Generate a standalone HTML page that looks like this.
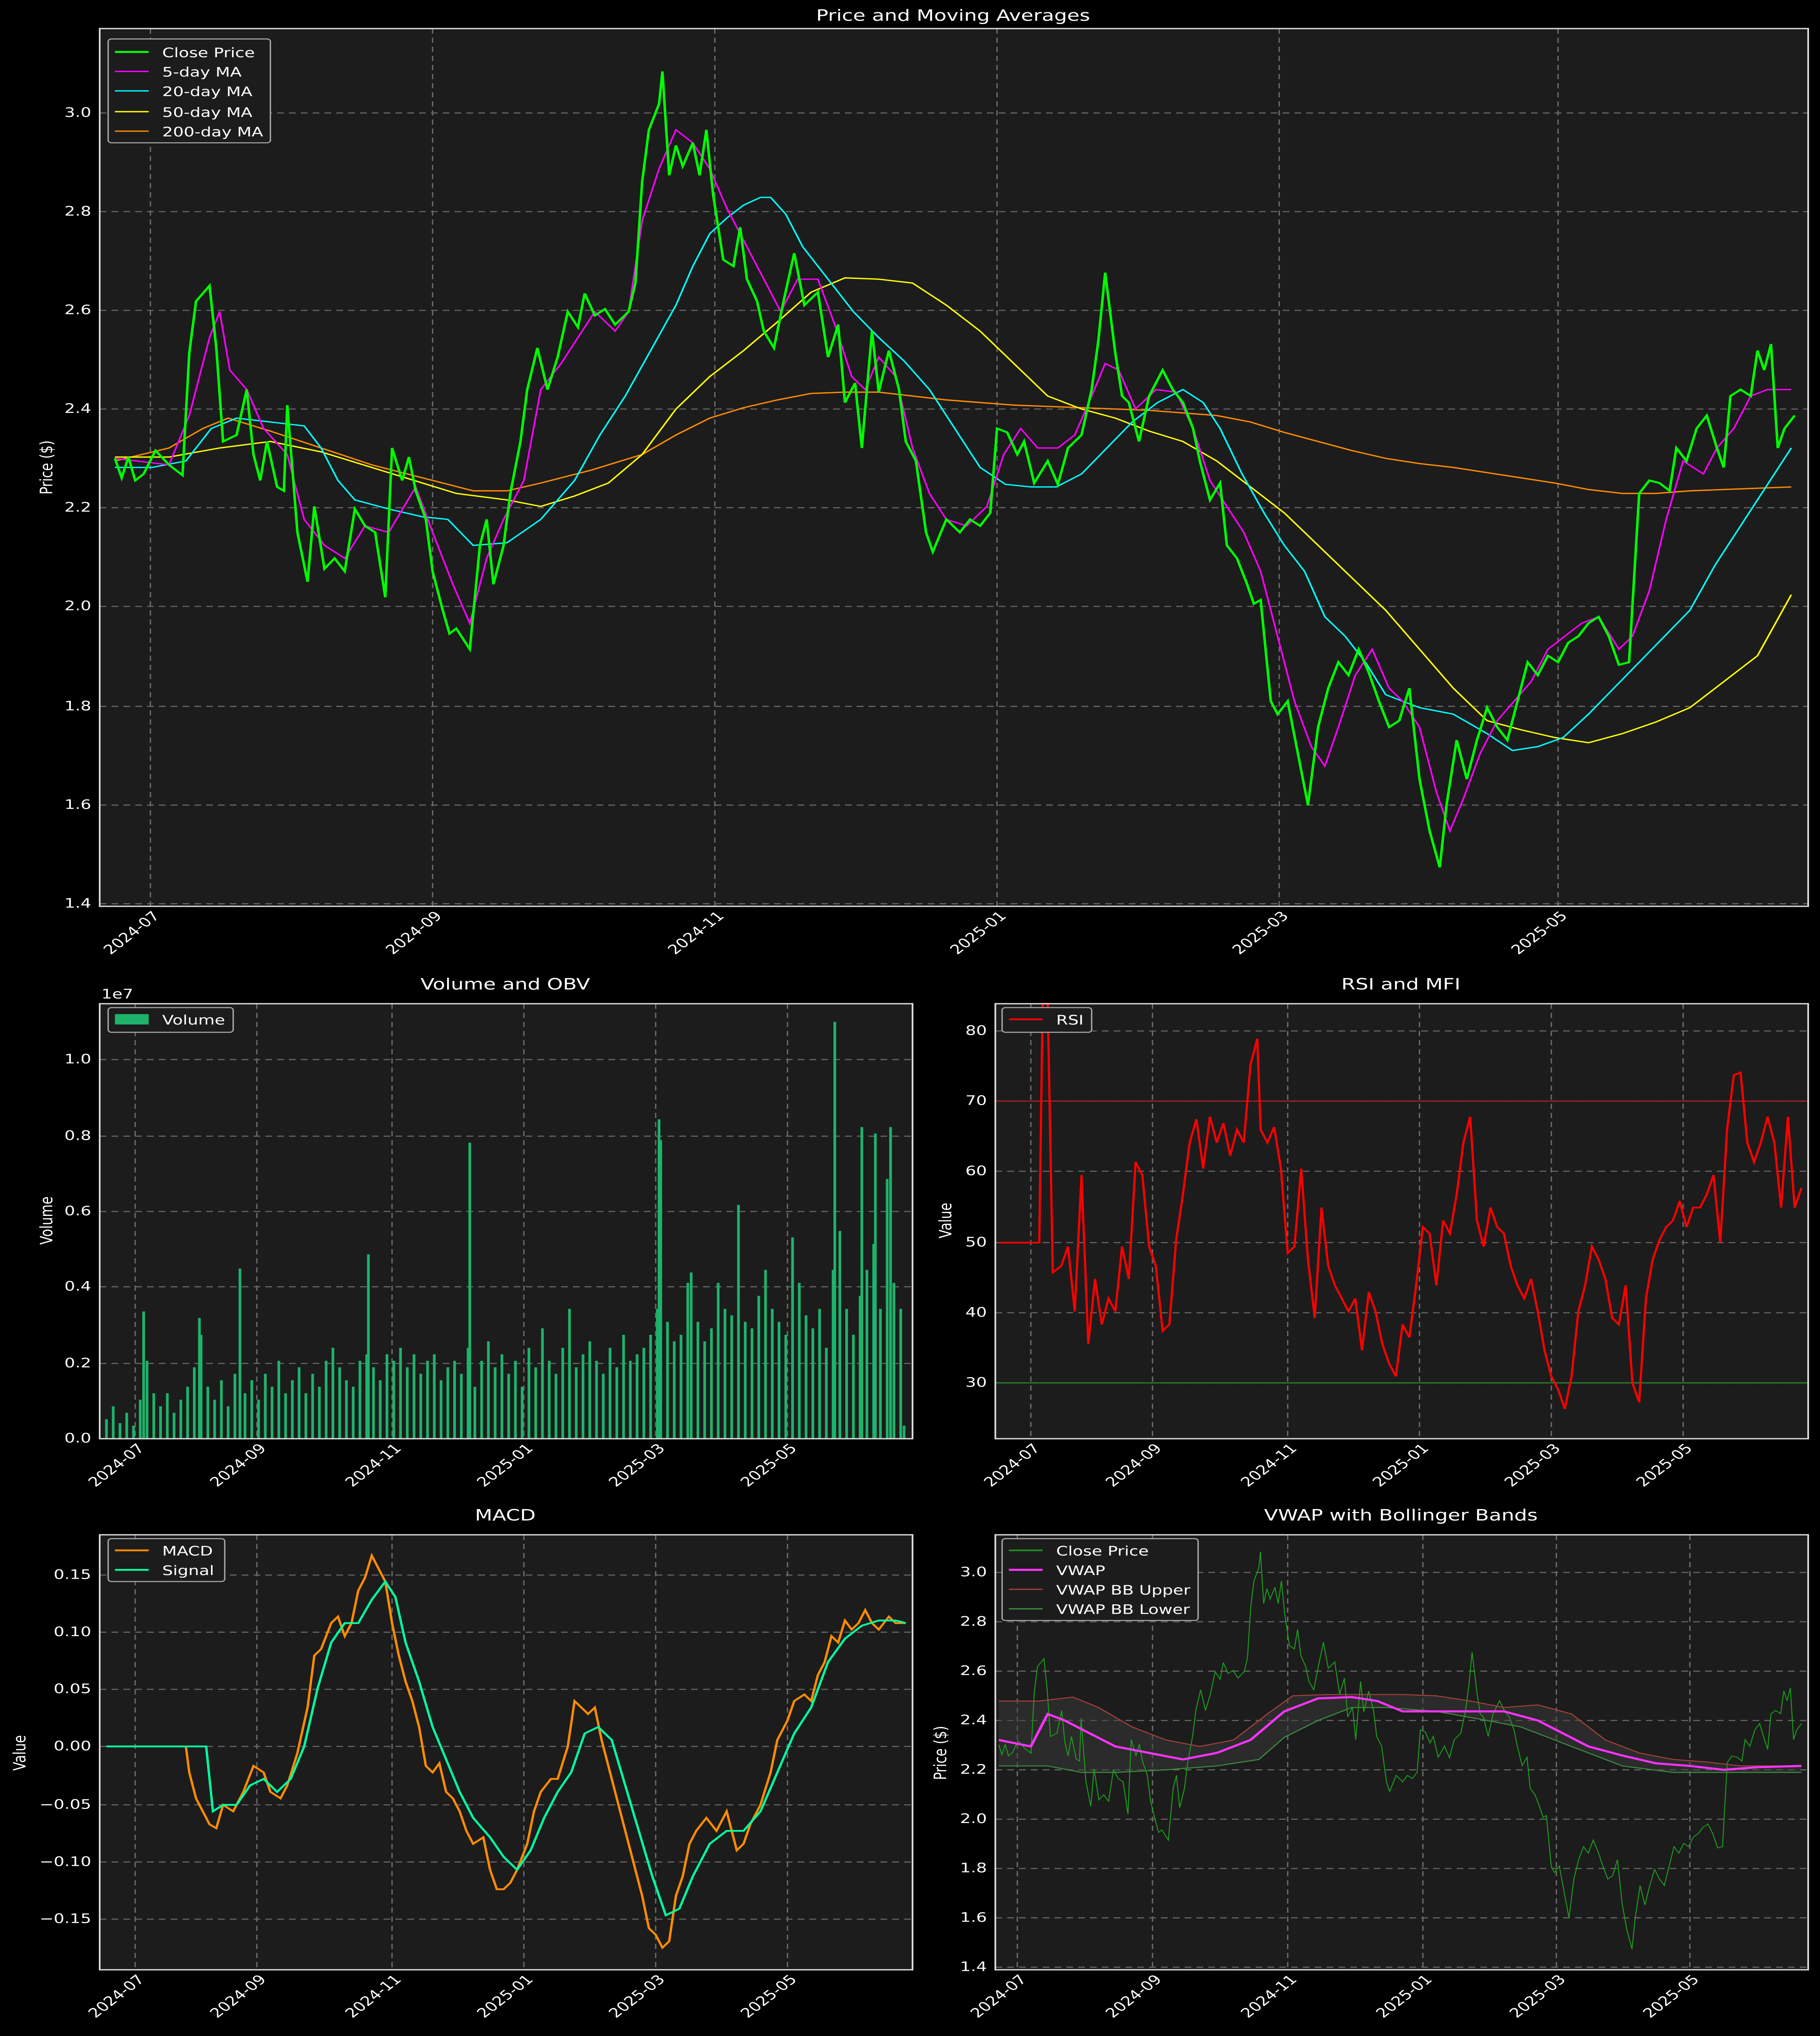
<!DOCTYPE html>
<html><head><meta charset="utf-8"><style>html,body{margin:0;padding:0;background:#000;width:100%;height:100%;overflow:hidden}svg{display:block;width:100vw;height:100vh}text{font-family:"DejaVu Sans","Liberation Sans",sans-serif;fill:#fff}</style></head><body>
<svg viewBox="0 0 1077 1568" preserveAspectRatio="none" xmlns="http://www.w3.org/2000/svg">
<rect width="1077" height="1568" fill="#000"/>
<defs>
<polyline id="close" fill="none" points="68,353 72,368 76,352 80,370 85,365 92,347 100,358 108,366 112,272 116,232 124,220 128,268 132,340 140,335 146,300 150,350 154,370 158,340 164,375 168,378 170,312 176,410 182,448 186,390 192,438 198,430 204,440 210,392 216,405 222,410 228,460 232,345 238,370 242,352 246,378 252,400 256,440 262,470 266,488 270,484 278,500 284,420 288,400 292,450 298,420 302,380 308,340 312,300 318,268 324,300 330,275 336,240 342,252 346,226 352,243 358,238 364,250 372,240 376,218 380,140 384,100 390,80 392,55 396,135 400,112 404,128 410,110 414,135 418,100 422,150 428,200 434,205 438,175 442,215 448,232 452,255 458,268 464,230 470,195 476,235 484,225 490,275 496,250 500,310 506,295 510,345 516,255 520,302 526,270 532,300 536,340 542,355 548,410 552,425 560,400 568,410 574,400 580,405 586,395 590,330 596,333 602,350 606,340 612,372 620,355 626,373 632,345 640,335 646,300 650,262 654,210 660,272 664,305 668,310 674,340 680,305 688,285 694,300 700,310 706,330 710,355 716,385 722,372 726,420 732,430 738,450 742,465 746,462 752,540 756,550 762,540 768,580 774,620 780,560 786,530 792,510 798,520 804,500 810,518 816,540 822,560 828,555 834,530 840,600 846,640 852,668 856,620 862,570 868,600 874,570 880,545 886,560 892,570 898,540 904,510 910,520 916,505 922,510 928,495 934,490 940,480 946,475 952,490 958,512 964,510 970,380 976,370 982,372 988,378 992,345 998,355 1004,330 1010,320 1016,345 1020,360 1024,305 1030,300 1036,305 1040,270 1044,285 1048,265 1052,345 1056,330 1062,320"/>
</defs>

<rect x="59" y="22" width="1011" height="676" fill="#1c1c1c"/>
<g stroke="#6a6a6a" stroke-width="0.8" stroke-dasharray="4,3">
<line x1="89" y1="22" x2="89" y2="698"/><line x1="256" y1="22" x2="256" y2="698"/><line x1="423" y1="22" x2="423" y2="698"/><line x1="590" y1="22" x2="590" y2="698"/><line x1="757" y1="22" x2="757" y2="698"/><line x1="922" y1="22" x2="922" y2="698"/>
<line x1="59" y1="696" x2="1070" y2="696"/><line x1="59" y1="620" x2="1070" y2="620"/><line x1="59" y1="544" x2="1070" y2="544"/><line x1="59" y1="467" x2="1070" y2="467"/><line x1="59" y1="391" x2="1070" y2="391"/><line x1="59" y1="315" x2="1070" y2="315"/><line x1="59" y1="239" x2="1070" y2="239"/><line x1="59" y1="163" x2="1070" y2="163"/><line x1="59" y1="87" x2="1070" y2="87"/>
</g>
<polyline fill="none" stroke="#ff8c00" stroke-width="1" points="68,355 100,345 120,330 135,322 160,332 190,345 220,358 250,368 280,378 300,378 320,372 350,362 380,350 400,335 420,322 440,314 460,308 480,303 500,302 520,302 540,305 560,308 580,310 600,312 620,313 640,314 660,315 680,316 700,318 720,320 740,325 760,333 780,340 800,347 820,353 840,357 860,360 880,364 900,368 920,372 940,377 960,380 980,380 1000,378 1020,377 1040,376 1060,375"/>
<polyline fill="none" stroke="#ffff00" stroke-width="1" points="68,352 100,352 130,345 160,340 190,348 220,360 250,372 270,380 300,385 320,390 340,382 360,372 380,350 400,315 420,290 440,270 460,248 480,225 500,214 520,215 540,218 560,235 580,255 600,280 620,305 640,315 660,322 680,332 700,340 720,355 740,375 760,395 780,420 800,445 820,470 840,500 860,530 880,555 900,562 920,568 940,572 960,565 980,556 1000,545 1020,525 1040,505 1060,458"/>
<polyline fill="none" stroke="#00ffff" stroke-width="1" points="68,360 90,360 110,355 125,330 140,322 160,325 180,328 190,345 200,370 210,385 230,392 250,398 265,400 280,420 300,418 320,400 340,370 355,335 370,305 385,270 400,235 410,205 420,180 430,168 440,158 450,152 456,152 465,165 475,190 490,215 505,240 520,260 535,278 550,300 565,330 580,360 595,373 610,375 625,375 640,365 655,345 670,325 685,310 700,300 712,310 722,330 735,365 748,395 760,420 772,440 784,475 796,490 808,510 820,535 840,545 860,550 880,565 895,578 910,575 925,568 940,550 955,530 970,510 985,490 1000,470 1015,435 1030,405 1045,375 1060,345"/>
<polyline fill="none" stroke="#ff00ff" stroke-width="1" points="68,353 100,358 112,320 124,260 130,240 136,285 146,300 156,330 170,350 180,400 192,420 204,430 216,405 230,410 246,375 256,410 268,450 278,480 288,430 298,400 310,370 320,300 332,280 342,260 352,240 364,255 372,240 380,170 390,130 400,100 410,110 420,130 430,160 440,185 452,215 462,240 472,215 484,215 494,250 504,290 512,300 520,275 530,290 540,345 550,380 560,400 572,405 584,390 594,350 604,330 614,345 626,345 636,335 646,305 654,280 662,285 672,315 684,300 696,302 706,330 716,370 726,390 736,410 746,440 756,490 766,540 776,575 784,590 792,560 802,520 812,500 822,530 830,540 840,560 850,610 858,640 866,615 876,580 886,555 896,540 906,525 916,500 926,490 936,480 946,475 958,500 966,490 976,455 986,400 996,355 1008,365 1016,345 1026,330 1036,305 1046,300 1060,300"/>
<use href="#close" stroke="#00ff00" stroke-width="1.5"/>
<rect x="59" y="22" width="1011" height="676" fill="none" stroke="#ddd" stroke-width="1"/>
<text x="564" y="16" font-size="12" text-anchor="middle">Price and Moving Averages</text>
<g font-size="10" text-anchor="end">
<text x="54" y="699">1.4</text><text x="54" y="623">1.6</text><text x="54" y="547">1.8</text><text x="54" y="470">2.0</text><text x="54" y="394">2.2</text><text x="54" y="318">2.4</text><text x="54" y="242">2.6</text><text x="54" y="166">2.8</text><text x="54" y="90">3.0</text>
<text transform="translate(95,706) rotate(-45)">2024-07</text><text transform="translate(262,706) rotate(-45)">2024-09</text><text transform="translate(429,706) rotate(-45)">2024-11</text><text transform="translate(596,706) rotate(-45)">2025-01</text><text transform="translate(763,706) rotate(-45)">2025-03</text><text transform="translate(928,706) rotate(-45)">2025-05</text>
</g>
<text transform="translate(31,360) rotate(-90)" font-size="10" text-anchor="middle">Price ($)</text>
<rect x="64" y="30" width="96" height="80" fill="#1c1c1c" stroke="#aaa" stroke-width="0.8" rx="2"/>
<g font-size="10">
<line x1="68" y1="40" x2="88" y2="40" stroke="#00ff00" stroke-width="1.5"/><text x="96" y="44">Close Price</text>
<line x1="68" y1="55" x2="88" y2="55" stroke="#ff00ff"/><text x="96" y="59">5-day MA</text>
<line x1="68" y1="70" x2="88" y2="70" stroke="#00ffff"/><text x="96" y="74">20-day MA</text>
<line x1="68" y1="86" x2="88" y2="86" stroke="#ffff00"/><text x="96" y="90">50-day MA</text>
<line x1="68" y1="101" x2="88" y2="101" stroke="#ff8c00"/><text x="96" y="105">200-day MA</text>
</g>

<rect x="59" y="773" width="481" height="335" fill="#1c1c1c"/>
<g stroke="#6a6a6a" stroke-width="0.8" stroke-dasharray="4,3">
<line x1="80" y1="773" x2="80" y2="1108"/><line x1="152" y1="773" x2="152" y2="1108"/><line x1="232" y1="773" x2="232" y2="1108"/><line x1="310" y1="773" x2="310" y2="1108"/><line x1="388" y1="773" x2="388" y2="1108"/><line x1="466" y1="773" x2="466" y2="1108"/>
<line x1="59" y1="1050" x2="540" y2="1050"/><line x1="59" y1="991" x2="540" y2="991"/><line x1="59" y1="933" x2="540" y2="933"/><line x1="59" y1="875" x2="540" y2="875"/><line x1="59" y1="816" x2="540" y2="816"/>
</g>
<path fill="none" stroke="#1db36b" stroke-width="1.6" d="M63 1108v-15M67 1108v-25M71 1108v-12M75 1108v-20M79 1108v-10M83 1108v-30M85 1108v-98M87 1108v-60M91 1108v-35M95 1108v-25M99 1108v-35M103 1108v-20M107 1108v-30M111 1108v-40M115 1108v-55M118 1108v-93M119 1108v-80M123 1108v-40M127 1108v-30M131 1108v-45M135 1108v-25M139 1108v-50M142 1108v-131M145 1108v-35M149 1108v-45M153 1108v-30M157 1108v-50M161 1108v-40M165 1108v-60M169 1108v-35M173 1108v-45M177 1108v-55M181 1108v-35M185 1108v-50M189 1108v-40M193 1108v-60M197 1108v-70M201 1108v-55M205 1108v-45M209 1108v-40M213 1108v-60M217 1108v-65M218 1108v-142M221 1108v-55M225 1108v-45M229 1108v-65M233 1108v-60M237 1108v-70M241 1108v-55M245 1108v-65M249 1108v-50M253 1108v-60M257 1108v-65M261 1108v-45M265 1108v-55M269 1108v-60M273 1108v-50M277 1108v-70M278 1108v-228M281 1108v-40M285 1108v-60M289 1108v-75M293 1108v-55M297 1108v-65M301 1108v-50M305 1108v-60M309 1108v-40M313 1108v-70M317 1108v-55M321 1108v-85M325 1108v-60M329 1108v-50M333 1108v-70M337 1108v-100M341 1108v-55M345 1108v-65M349 1108v-75M353 1108v-60M357 1108v-50M361 1108v-70M365 1108v-55M369 1108v-80M373 1108v-60M377 1108v-65M381 1108v-70M385 1108v-80M389 1108v-100M390 1108v-246M391 1108v-230M395 1108v-90M399 1108v-75M403 1108v-80M407 1108v-120M409 1108v-128M413 1108v-90M417 1108v-75M421 1108v-85M425 1108v-120M429 1108v-100M433 1108v-95M437 1108v-180M441 1108v-90M445 1108v-85M449 1108v-110M453 1108v-130M457 1108v-100M461 1108v-90M465 1108v-80M469 1108v-155M473 1108v-120M477 1108v-95M481 1108v-85M485 1108v-100M489 1108v-70M493 1108v-130M494 1108v-321M497 1108v-160M501 1108v-100M505 1108v-80M509 1108v-110M510 1108v-240M513 1108v-130M517 1108v-150M518 1108v-235M521 1108v-100M525 1108v-200M527 1108v-240M529 1108v-120M533 1108v-100M535 1108v-10"/>
<rect x="59" y="773" width="481" height="335" fill="none" stroke="#ddd" stroke-width="1"/>
<text x="299" y="762" font-size="12" text-anchor="middle">Volume and OBV</text>
<text x="60" y="769" font-size="10">1e7</text>
<g font-size="10" text-anchor="end">
<text x="54" y="1111">0.0</text><text x="54" y="1053">0.2</text><text x="54" y="994">0.4</text><text x="54" y="936">0.6</text><text x="54" y="878">0.8</text><text x="54" y="819">1.0</text>
<text transform="translate(86,1116) rotate(-45)">2024-07</text><text transform="translate(158,1116) rotate(-45)">2024-09</text><text transform="translate(238,1116) rotate(-45)">2024-11</text><text transform="translate(316,1116) rotate(-45)">2025-01</text><text transform="translate(394,1116) rotate(-45)">2025-03</text><text transform="translate(472,1116) rotate(-45)">2025-05</text>
</g>
<text transform="translate(31,940) rotate(-90)" font-size="10" text-anchor="middle">Volume</text>
<rect x="64" y="776" width="74" height="19" fill="#1c1c1c" stroke="#aaa" stroke-width="0.8" rx="2"/>
<rect x="68" y="781" width="20" height="8" fill="#1db36b"/><text x="96" y="789" font-size="10">Volume</text>

<rect x="589" y="773" width="481" height="335" fill="#1c1c1c"/>
<g stroke="#6a6a6a" stroke-width="0.8" stroke-dasharray="4,3">
<line x1="610" y1="773" x2="610" y2="1108"/><line x1="682" y1="773" x2="682" y2="1108"/><line x1="762" y1="773" x2="762" y2="1108"/><line x1="840" y1="773" x2="840" y2="1108"/><line x1="918" y1="773" x2="918" y2="1108"/><line x1="996" y1="773" x2="996" y2="1108"/>
<line x1="589" y1="1065" x2="1070" y2="1065"/><line x1="589" y1="1011" x2="1070" y2="1011"/><line x1="589" y1="957" x2="1070" y2="957"/><line x1="589" y1="902" x2="1070" y2="902"/><line x1="589" y1="848" x2="1070" y2="848"/><line x1="589" y1="794" x2="1070" y2="794"/>
</g>
<line x1="589" y1="848" x2="1070" y2="848" stroke="#b02020" stroke-width="0.8"/>
<line x1="589" y1="1065" x2="1070" y2="1065" stroke="#2a8a2a" stroke-width="0.8"/>
<polyline fill="none" stroke="#ff0000" stroke-width="1.3" points="591,957 615,957 617,773 620,773 623,980 628,975 632,960 636,1010 640,905 644,1035 648,985 652,1020 656,1000 660,1010 664,960 668,985 672,895 676,905 680,960 684,975 688,1025 692,1020 696,955 700,920 704,880 708,862 712,900 716,860 720,880 724,865 728,890 732,870 736,880 740,820 744,800 746,870 750,880 754,868 758,900 762,965 766,960 770,900 774,970 778,1015 782,930 786,975 790,990 794,1000 798,1010 802,1000 806,1040 810,995 814,1010 818,1035 822,1050 826,1060 830,1020 834,1030 838,990 842,945 846,950 850,990 854,940 858,950 862,920 866,880 870,860 874,940 878,960 882,930 886,945 890,950 894,975 898,990 902,1000 906,985 910,1010 914,1040 918,1060 922,1070 926,1085 930,1060 934,1010 938,990 942,960 946,970 950,985 954,1015 958,1020 962,990 966,1065 970,1080 974,1000 978,970 982,955 986,945 990,940 994,925 998,945 1002,930 1006,930 1010,920 1014,905 1018,957 1022,870 1026,828 1030,826 1034,880 1038,895 1042,880 1046,860 1050,880 1054,930 1058,860 1062,930 1066,915"/>
<rect x="589" y="773" width="481" height="335" fill="none" stroke="#ddd" stroke-width="1"/>
<text x="829" y="762" font-size="12" text-anchor="middle">RSI and MFI</text>
<g font-size="10" text-anchor="end">
<text x="584" y="1068">30</text><text x="584" y="1014">40</text><text x="584" y="960">50</text><text x="584" y="905">60</text><text x="584" y="851">70</text><text x="584" y="797">80</text>
<text transform="translate(616,1116) rotate(-45)">2024-07</text><text transform="translate(688,1116) rotate(-45)">2024-09</text><text transform="translate(768,1116) rotate(-45)">2024-11</text><text transform="translate(846,1116) rotate(-45)">2025-01</text><text transform="translate(924,1116) rotate(-45)">2025-03</text><text transform="translate(1002,1116) rotate(-45)">2025-05</text>
</g>
<text transform="translate(563,940) rotate(-90)" font-size="10" text-anchor="middle">Value</text>
<rect x="593" y="776" width="53" height="19" fill="#1c1c1c" stroke="#aaa" stroke-width="0.8" rx="2"/>
<line x1="597" y1="785" x2="617" y2="785" stroke="#ff0000" stroke-width="1.3"/><text x="625" y="789" font-size="10">RSI</text>

<rect x="59" y="1182" width="481" height="335" fill="#1c1c1c"/>
<g stroke="#6a6a6a" stroke-width="0.8" stroke-dasharray="4,3">
<line x1="80" y1="1182" x2="80" y2="1517"/><line x1="152" y1="1182" x2="152" y2="1517"/><line x1="232" y1="1182" x2="232" y2="1517"/><line x1="310" y1="1182" x2="310" y2="1517"/><line x1="388" y1="1182" x2="388" y2="1517"/><line x1="466" y1="1182" x2="466" y2="1517"/>
<line x1="59" y1="1478" x2="540" y2="1478"/><line x1="59" y1="1434" x2="540" y2="1434"/><line x1="59" y1="1390" x2="540" y2="1390"/><line x1="59" y1="1345" x2="540" y2="1345"/><line x1="59" y1="1301" x2="540" y2="1301"/><line x1="59" y1="1257" x2="540" y2="1257"/><line x1="59" y1="1213" x2="540" y2="1213"/>
</g>
<polyline fill="none" stroke="#ff8c00" stroke-width="1.4" points="63,1345 110,1345 112,1365 116,1385 120,1395 124,1405 128,1408 132,1390 138,1395 144,1380 150,1360 156,1365 160,1380 166,1385 170,1375 176,1350 182,1315 186,1275 190,1270 196,1250 200,1245 204,1260 208,1250 212,1225 216,1215 220,1198 224,1208 228,1218 232,1250 236,1275 240,1295 244,1310 248,1330 252,1360 256,1365 260,1358 264,1380 268,1385 272,1395 276,1410 280,1420 286,1415 290,1440 294,1455 298,1455 302,1450 306,1440 312,1420 316,1395 320,1380 326,1370 330,1370 336,1345 340,1310 344,1315 348,1320 352,1315 356,1340 360,1360 364,1380 368,1400 372,1420 376,1440 380,1460 384,1485 388,1490 392,1500 396,1495 400,1460 404,1445 408,1420 412,1410 418,1400 424,1410 430,1395 436,1425 440,1420 444,1405 450,1390 456,1365 460,1340 466,1325 470,1310 476,1305 480,1310 484,1290 488,1280 492,1260 496,1265 500,1248 504,1255 508,1250 512,1240 516,1250 520,1255 526,1245 530,1250 536,1250"/>
<polyline fill="none" stroke="#00ff9f" stroke-width="1.4" points="63,1345 122,1345 126,1395 132,1390 140,1390 148,1375 156,1370 164,1380 172,1370 180,1345 188,1300 196,1265 204,1250 212,1250 220,1232 228,1218 234,1230 240,1265 248,1295 256,1330 264,1355 272,1380 280,1400 290,1415 298,1430 306,1440 314,1425 322,1400 330,1380 338,1365 346,1335 354,1330 362,1340 370,1375 378,1410 386,1445 394,1475 402,1470 410,1445 420,1420 430,1410 440,1410 450,1395 460,1365 470,1335 480,1315 490,1280 500,1262 510,1252 520,1248 530,1248 536,1250"/>
<rect x="59" y="1182" width="481" height="335" fill="none" stroke="#ddd" stroke-width="1"/>
<text x="299" y="1171" font-size="12" text-anchor="middle">MACD</text>
<g font-size="10" text-anchor="end">
<text x="54" y="1481">−0.15</text><text x="54" y="1437">−0.10</text><text x="54" y="1393">−0.05</text><text x="54" y="1348">0.00</text><text x="54" y="1304">0.05</text><text x="54" y="1260">0.10</text><text x="54" y="1216">0.15</text>
<text transform="translate(86,1525) rotate(-45)">2024-07</text><text transform="translate(158,1525) rotate(-45)">2024-09</text><text transform="translate(238,1525) rotate(-45)">2024-11</text><text transform="translate(316,1525) rotate(-45)">2025-01</text><text transform="translate(394,1525) rotate(-45)">2025-03</text><text transform="translate(472,1525) rotate(-45)">2025-05</text>
</g>
<text transform="translate(15,1350) rotate(-90)" font-size="10" text-anchor="middle">Value</text>
<rect x="64" y="1185" width="69" height="33" fill="#1c1c1c" stroke="#aaa" stroke-width="0.8" rx="2"/>
<line x1="68" y1="1194" x2="88" y2="1194" stroke="#ff8c00" stroke-width="1.4"/><text x="96" y="1198" font-size="10">MACD</text>
<line x1="68" y1="1209" x2="88" y2="1209" stroke="#00ff9f" stroke-width="1.4"/><text x="96" y="1213" font-size="10">Signal</text>

<rect x="589" y="1182" width="481" height="335" fill="#1c1c1c"/>
<g stroke="#6a6a6a" stroke-width="0.8" stroke-dasharray="4,3">
<line x1="602" y1="1182" x2="602" y2="1517"/><line x1="682" y1="1182" x2="682" y2="1517"/><line x1="762" y1="1182" x2="762" y2="1517"/><line x1="842" y1="1182" x2="842" y2="1517"/><line x1="921" y1="1182" x2="921" y2="1517"/><line x1="1000" y1="1182" x2="1000" y2="1517"/>
<line x1="589" y1="1515" x2="1070" y2="1515"/><line x1="589" y1="1477" x2="1070" y2="1477"/><line x1="589" y1="1439" x2="1070" y2="1439"/><line x1="589" y1="1401" x2="1070" y2="1401"/><line x1="589" y1="1363" x2="1070" y2="1363"/><line x1="589" y1="1325" x2="1070" y2="1325"/><line x1="589" y1="1287" x2="1070" y2="1287"/><line x1="589" y1="1249" x2="1070" y2="1249"/><line x1="589" y1="1211" x2="1070" y2="1211"/>
</g>
<polygon fill="#3a3a3a" opacity="0.5" points="591,1310 615,1310 635,1307 650,1315 670,1330 690,1340 710,1345 730,1340 750,1320 765,1306 785,1305 810,1305 830,1305 850,1306 870,1310 890,1315 910,1313 930,1320 950,1340 970,1350 990,1355 1010,1357 1030,1360 1066,1360 1066,1365 1020,1365 990,1365 960,1360 940,1350 920,1340 900,1330 880,1325 850,1318 820,1315 800,1315 780,1325 760,1338 745,1355 720,1360 690,1363 660,1365 640,1365 620,1360 591,1360"/>
<g transform="translate(591,1211) scale(0.478,0.4992) translate(-68,-87)"><use href="#close" stroke="#1e9a1e" stroke-width="1.2" vector-effect="non-scaling-stroke" style="vector-effect:non-scaling-stroke"/></g>
<polyline fill="none" stroke="#a0403a" stroke-width="0.8" points="591,1310 615,1310 635,1307 650,1315 670,1330 690,1340 710,1345 730,1340 750,1320 765,1306 785,1305 810,1305 830,1305 850,1306 870,1310 890,1315 910,1313 930,1320 950,1340 970,1350 990,1355 1010,1357 1030,1360 1066,1360"/>
<polyline fill="none" stroke="#3d8a3d" stroke-width="0.8" points="591,1360 620,1360 640,1365 660,1365 690,1363 720,1360 745,1355 760,1338 780,1325 800,1315 820,1315 850,1318 880,1325 900,1330 920,1340 940,1350 960,1360 990,1365 1020,1365 1066,1365"/>
<polyline fill="none" stroke="#ff33ff" stroke-width="1.6" points="591,1340 610,1345 620,1320 630,1325 645,1335 660,1345 680,1350 700,1355 720,1350 740,1340 760,1318 780,1308 800,1307 815,1310 830,1318 850,1318 870,1318 890,1318 910,1325 925,1335 940,1345 960,1352 980,1358 1000,1360 1020,1363 1040,1361 1066,1360"/>
<rect x="589" y="1182" width="481" height="335" fill="none" stroke="#ddd" stroke-width="1"/>
<text x="829" y="1171" font-size="12" text-anchor="middle">VWAP with Bollinger Bands</text>
<g font-size="10" text-anchor="end">
<text x="584" y="1518">1.4</text><text x="584" y="1480">1.6</text><text x="584" y="1442">1.8</text><text x="584" y="1404">2.0</text><text x="584" y="1366">2.2</text><text x="584" y="1328">2.4</text><text x="584" y="1290">2.6</text><text x="584" y="1252">2.8</text><text x="584" y="1214">3.0</text>
<text transform="translate(608,1525) rotate(-45)">2024-07</text><text transform="translate(688,1525) rotate(-45)">2024-09</text><text transform="translate(768,1525) rotate(-45)">2024-11</text><text transform="translate(848,1525) rotate(-45)">2025-01</text><text transform="translate(927,1525) rotate(-45)">2025-03</text><text transform="translate(1006,1525) rotate(-45)">2025-05</text>
</g>
<text transform="translate(560,1350) rotate(-90)" font-size="10" text-anchor="middle">Price ($)</text>
<rect x="593" y="1185" width="116" height="63" fill="#1c1c1c" stroke="#aaa" stroke-width="0.8" rx="2"/>
<g font-size="10">
<line x1="597" y1="1194" x2="617" y2="1194" stroke="#1e9a1e" stroke-width="1.2"/><text x="625" y="1198">Close Price</text>
<line x1="597" y1="1209" x2="617" y2="1209" stroke="#ff33ff" stroke-width="1.6"/><text x="625" y="1213">VWAP</text>
<line x1="597" y1="1224" x2="617" y2="1224" stroke="#a0403a"/><text x="625" y="1228">VWAP BB Upper</text>
<line x1="597" y1="1239" x2="617" y2="1239" stroke="#3d8a3d"/><text x="625" y="1243">VWAP BB Lower</text>
</g>
</svg>
</body></html>
